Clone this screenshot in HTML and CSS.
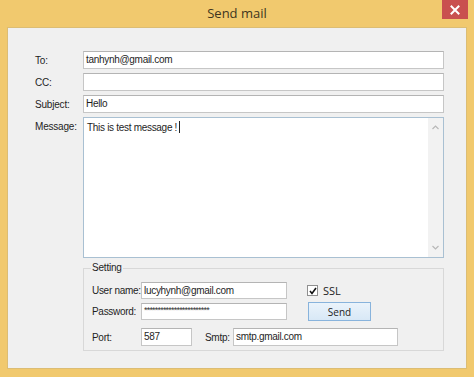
FILE: index.html
```html
<!DOCTYPE html>
<html lang="en">
<head>
    <meta charset="UTF-8">
    <meta name="viewport" content="width=device-width, initial-scale=1.0">
    <title>Send mail</title>
    <link rel="stylesheet" href="styles.css">
</head>
<body>
    <div class="window">
        <div class="titlebar">
            <span class="title">Send mail</span>
            <span class="close">
                <svg width="10" height="10" viewBox="0 0 10 10"><path d="M1.5 1.5 L8.5 8.5 M8.5 1.5 L1.5 8.5" stroke="#fff" stroke-width="2" stroke-linecap="square"/></svg>
            </span>
        </div>

        <div class="client">
            <div class="mail-form">
                <label>To:</label>
                <div class="field">tanhynh@gmail.com</div>
                <label>CC:</label>
                <div class="field"></div>
                <label>Subject:</label>
                <div class="field">Hello</div>
                <label class="top">Message:</label>
                <div class="message">
                    <div class="message-text">This is test message !<span class="caret"></span></div>
                    <div class="scrollbar">
                        <svg width="7" height="5" viewBox="0 0 7 5"><path d="M0.5 4 L3.5 1 L6.5 4" fill="none" stroke="#b8b8b8" stroke-width="1.2"/></svg>
                        <svg width="7" height="5" viewBox="0 0 7 5"><path d="M0.5 1 L3.5 4 L6.5 1" fill="none" stroke="#b8b8b8" stroke-width="1.2"/></svg>
                    </div>
                </div>
            </div>

            <fieldset class="settings">
                <legend>Setting</legend>
                <div class="row row-user">
                    <label>User name:</label>
                    <div class="field field-user">lucyhynh@gmail.com</div>
                    <span class="checkbox">
                        <svg width="8" height="8" viewBox="0 0 8 8"><path d="M1 4 L3 6.5 L7 1" fill="none" stroke="#111" stroke-width="1.6"/></svg>
                    </span>
                    <span class="ssl">SSL</span>
                </div>
                <div class="row row-pass">
                    <label>Password:</label>
                    <div class="field field-user password">************************</div>
                    <button class="send">Send</button>
                </div>
                <div class="row row-server">
                    <label>Port:</label>
                    <div class="field field-port">587</div>
                    <label class="smtp-label">Smtp:</label>
                    <div class="field field-smtp">smtp.gmail.com</div>
                </div>
            </fieldset>
        </div>
    </div>
</body>
</html>
```

FILE: styles.css
```css
* {
    box-sizing: border-box;
}
body {
    margin: 0;
    background: #f1c96e;
    font-family: "Liberation Sans", Arial, sans-serif;
    font-size: 10px;
    color: #1e1e1e;
}
.window {
    width: 474px;
    height: 377px;
}
.titlebar {
    position: relative;
    height: 27px;
    display: flex;
    align-items: center;
    justify-content: center;
}
.title {
    font-family: "Open Sans", "Noto Sans", sans-serif;
    font-size: 13px;
    color: #3f3520;
    margin-top: -1px;
}
.close {
    position: absolute;
    top: 0;
    left: 442px;
    width: 26px;
    height: 19px;
    background: #c9504f;
    display: flex;
    align-items: center;
    justify-content: center;
}
.client {
    margin-left: 7px;
    width: 460px;
    height: 342px;
    background: #f0f0f0;
    border: 1px solid #dcbd74;
    padding: 23px 0 0 27px;
}
.mail-form {
    display: grid;
    grid-template-columns: 48px 361px;
    grid-template-rows: 18px 18px 18px 141px;
    row-gap: 4px;
}
.mail-form label {
    align-self: center;
    letter-spacing: -0.2px;
}
.mail-form label.top {
    align-self: start;
    padding-top: 4px;
}
.field {
    flex-shrink: 0;
    height: 18px;
    background: #fff;
    border: 1px solid #c6c6c6;
    border-top-color: #b4b4b4;
    padding: 0 2px;
    line-height: 16px;
    letter-spacing: -0.3px;
    white-space: nowrap;
    overflow: hidden;
}
.message {
    display: flex;
    background: #fff;
    border: 1px solid #a9c0d2;
}
.message-text {
    flex: 1;
    padding: 3px 3px;
    letter-spacing: -0.3px;
}
.caret {
    display: inline-block;
    width: 1px;
    height: 12px;
    margin-left: 2px;
    background: #222;
    vertical-align: -2px;
}
.scrollbar {
    width: 15px;
    background: #f2f2f2;
    display: flex;
    flex-direction: column;
    justify-content: space-between;
    align-items: center;
    padding: 7px 0 7px;
}
.settings {
    margin: 4px 0 0 48px;
    width: 361px;
    border: 1px solid #d8d8d8;
    padding: 8px 7px 4px 7px;
}
.settings legend {
    padding: 0 1px;
    line-height: 12px;
    letter-spacing: -0.2px;
}
.row {
    display: flex;
    align-items: center;
}
.row label {
    flex-shrink: 0;
    width: 50px;
    padding-left: 1px;
    letter-spacing: -0.3px;
    white-space: nowrap;
}
.row-user {
    height: 17px;
}
.row-pass {
    height: 19px;
    margin-top: 3px;
}
.row-server {
    height: 18px;
    margin-top: 7px;
}
.field-user {
    width: 146px;
    height: 17px;
    line-height: 15px;
}
.password {
    font-size: 9px;
    letter-spacing: -0.8px;
    line-height: 13px;
    color: #333;
}
.field-port {
    width: 51px;
}
.row .smtp-label {
    width: 29px;
    margin-left: 12px;
}
.field-smtp {
    width: 165px;
}
.checkbox {
    flex-shrink: 0;
    width: 11px;
    height: 11px;
    margin-left: 20px;
    background: #fff;
    border: 1px solid #8f8f8f;
    display: flex;
    align-items: center;
    justify-content: center;
}
.ssl {
    margin-left: 5px;
    font-family: "Open Sans", "Noto Sans", sans-serif;
    font-size: 11px;
    color: #222;
}
.send {
    flex-shrink: 0;
    margin-left: 21px;
    width: 63px;
    height: 19px;
    padding: 0;
    font-family: "Open Sans", "Noto Sans", sans-serif;
    font-size: 10px;
    color: #222;
    background: linear-gradient(#eaf3fb, #d8e8f6);
    border: 1px solid #88b3dc;
    border-radius: 0;
}
```
